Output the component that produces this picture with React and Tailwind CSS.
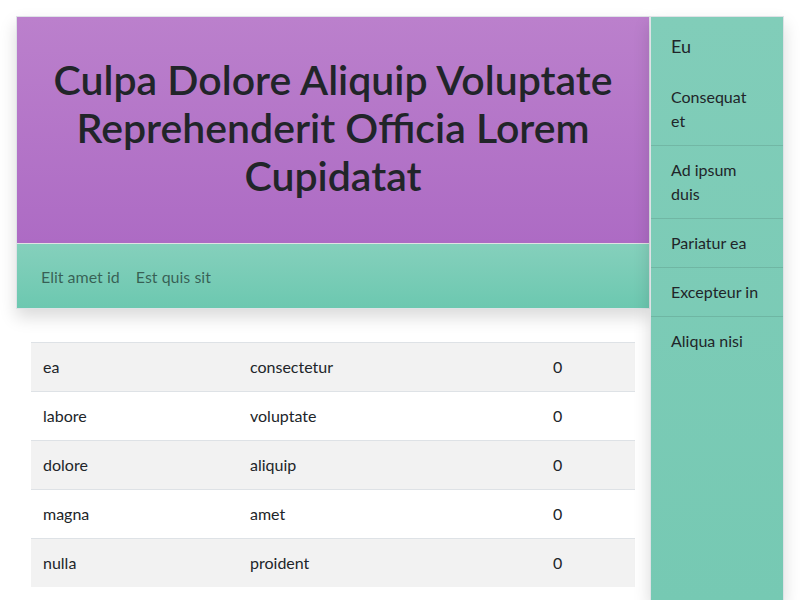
import React from "react";

const rows = [
  ["ea", "consectetur", "0"],
  ["labore", "voluptate", "0"],
  ["dolore", "aliquip", "0"],
  ["magna", "amet", "0"],
  ["nulla", "proident", "0"],
];

const sideItems = ["Consequat et", "Ad ipsum duis", "Pariatur ea", "Excepteur in", "Aliqua nisi"];

export default function App() {
  return (
    <div
      className="flex min-h-screen bg-white pt-4 pl-4 pr-[16px] text-[16px] leading-6 text-[#212529]"
      style={{ fontFamily: 'Lato, "Open Sans", sans-serif' }}
    >
      <main className="w-[634px] shrink-0">
        <div className="border border-[#dee2e6] shadow-[0_8px_16px_rgba(0,0,0,0.15)]">
          <header className="flex h-[227px] items-center justify-center border-b border-[#e2e2e2] bg-gradient-to-b from-[#bb80cc] to-[#ad6bc4] px-8 pb-1">
            <h1 className="text-center text-[41px] font-semibold leading-[48px] text-[#212529]">
              Culpa Dolore Aliquip Voluptate Reprehenderit Officia Lorem Cupidatat
            </h1>
          </header>
          <nav className="flex h-[64px] items-center bg-gradient-to-b from-[#85d0bc] to-[#6cc8b0] px-4 pt-0.5">
            <a className="px-2 text-[rgba(0,0,0,0.55)]">Elit amet id</a>
            <a className="px-2 text-[rgba(0,0,0,0.55)]">Est quis sit</a>
          </nav>
        </div>
        <div className="px-[15px] pt-[33px]">
          <table className="w-full table-fixed border-collapse">
            <colgroup>
              <col className="w-[207px]" />
              <col className="w-[303px]" />
              <col />
            </colgroup>
            <tbody>
              {rows.map((r, i) => (
                <tr key={i} className={`border-t border-[#dee2e6] ${i % 2 === 0 ? "bg-[#f2f2f2]" : "bg-white"}`}>
                  {r.map((c, j) => (
                    <td key={j} className="px-3 py-3">{c}</td>
                  ))}
                </tr>
              ))}
            </tbody>
          </table>
        </div>
      </main>
      <aside className="w-[134px] shrink-0 border border-b-0 border-[#dee2e6] bg-gradient-to-b from-[#81cdb9] to-[#76c9b3] shadow-[0_8px_16px_rgba(0,0,0,0.15)]">
        <h5 className="px-5 pt-4 pb-[13px] text-[18px] leading-[27px]">Eu</h5>
        <ul>
          {sideItems.map((s, i) => (
            <li key={i} className={`px-5 py-3 ${i < sideItems.length - 1 ? "border-b border-[rgba(0,0,0,0.1)]" : ""}`}>
              {s}
            </li>
          ))}
        </ul>
      </aside>
    </div>
  );
}
